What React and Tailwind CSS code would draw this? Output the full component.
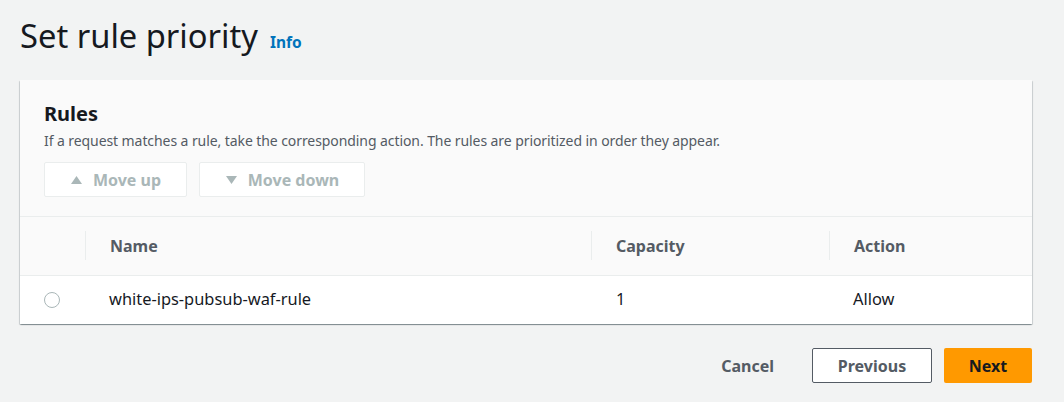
import { useState } from 'react';

/**
 * SetRulePriority
 * Step of a WAF rule wizard: order the rules, then move on.
 */
const rules = [{ name: 'white-ips-pubsub-waf-rule', capacity: 1, action: 'Allow' }];

const App = () => {
  const [selected, setSelected] = useState(null);

  return (
    <div
      className="min-h-[402px] w-full bg-[#f2f3f3] px-5 pt-4 text-[#16191f]"
      style={{ fontFamily: '"Noto Sans", "Open Sans", Arial, sans-serif' }}
    >
      {/* Page title */}
      <div className="flex h-10 items-baseline gap-3">
        <h1 className="text-[32.7px] font-normal leading-[40px] text-[#16191f]">Set rule priority</h1>
        <a href="#" className="text-[15.5px] font-bold text-[#0073bb]">
          Info
        </a>
      </div>

      {/* Rules container */}
      <div className="mt-6 w-[1012px] rounded-[1px] bg-white shadow-[0_1px_1px_0_rgba(0,28,36,0.3),1px_1px_1px_0_rgba(0,28,36,0.15),-1px_1px_1px_0_rgba(0,28,36,0.15)]">
        <div className="border-b border-[#eaeded] bg-[#fafafa] px-6 pb-[19px] pt-5">
          <h2 className="text-[20px] font-bold leading-[28px]">Rules</h2>
          <p className="mt-[3px] text-[14px] leading-[20px] tracking-[-0.08px] text-[#545b64]">
            If a request matches a rule, take the corresponding action. The rules are prioritized in order they appear.
          </p>
          <div className="mt-[11px] flex gap-3">
            <button
              disabled
              className="flex h-[35px] w-[143px] items-center justify-center gap-[10px] rounded-[2px] border border-[#eaeded] bg-white text-[16px] font-bold text-[#aab7b8]"
            >
              <svg width="13" height="10" viewBox="0 0 13 10">
                <path d="M6.5 1 L12 9 L1 9 Z" fill="#aab7b8" />
              </svg>
              Move up
            </button>
            <button
              disabled
              className="flex h-[35px] w-[166px] items-center justify-center gap-[10px] rounded-[2px] border border-[#eaeded] bg-white text-[16px] font-bold text-[#aab7b8]"
            >
              <svg width="13" height="10" viewBox="0 0 13 10">
                <path d="M1 1 L12 1 L6.5 9 Z" fill="#aab7b8" />
              </svg>
              Move down
            </button>
          </div>
        </div>

        {/* Table */}
        <table className="w-full border-collapse text-left">
          <thead>
            <tr className="h-[58px] border-b border-[#eaeded] bg-[#fafafa]">
              <th className="w-[65px]" />
              <th className="w-[506px] p-0">
                <div className="flex h-[29px] items-center border-l border-[#eaeded] pl-6 text-[16px] font-bold text-[#545b64]">
                  Name
                </div>
              </th>
              <th className="w-[238px] p-0">
                <div className="flex h-[29px] items-center border-l border-[#eaeded] pl-6 text-[16px] font-bold text-[#545b64]">
                  Capacity
                </div>
              </th>
              <th className="p-0">
                <div className="flex h-[29px] items-center border-l border-[#eaeded] pl-6 text-[16px] font-bold text-[#545b64]">
                  Action
                </div>
              </th>
            </tr>
          </thead>
          <tbody>
            {rules.map((rule) => (
              <tr key={rule.name} className="h-[49px] bg-white text-[16.4px]">
                <td className="pl-6">
                  <button
                    onClick={() => setSelected(rule.name)}
                    className="flex h-4 w-4 items-center justify-center rounded-full border-[1.5px] border-[#aab7b8] bg-white"
                  >
                    {selected === rule.name && <span className="h-2 w-2 rounded-full bg-[#0073bb]" />}
                  </button>
                </td>
                <td className="pl-[24px]">{rule.name}</td>
                <td className="pl-[25px]">{rule.capacity}</td>
                <td className="pl-[24px]">{rule.action}</td>
              </tr>
            ))}
          </tbody>
        </table>
      </div>

      {/* Wizard actions */}
      <div className="mt-6 flex w-[1012px] items-center justify-end gap-3">
        <button className="px-5 text-[16px] font-bold text-[#545b64]">Cancel</button>
        <button className="ml-[6px] h-[35px] w-[120px] rounded-[2px] border border-[#545b64] bg-white text-[16px] font-bold text-[#545b64]">
          Previous
        </button>
        <button className="h-[35px] w-[88px] rounded-[2px] bg-[#ff9900] text-[16px] font-bold text-[#16191f]">
          Next
        </button>
      </div>
    </div>
  );
};

export default App;
